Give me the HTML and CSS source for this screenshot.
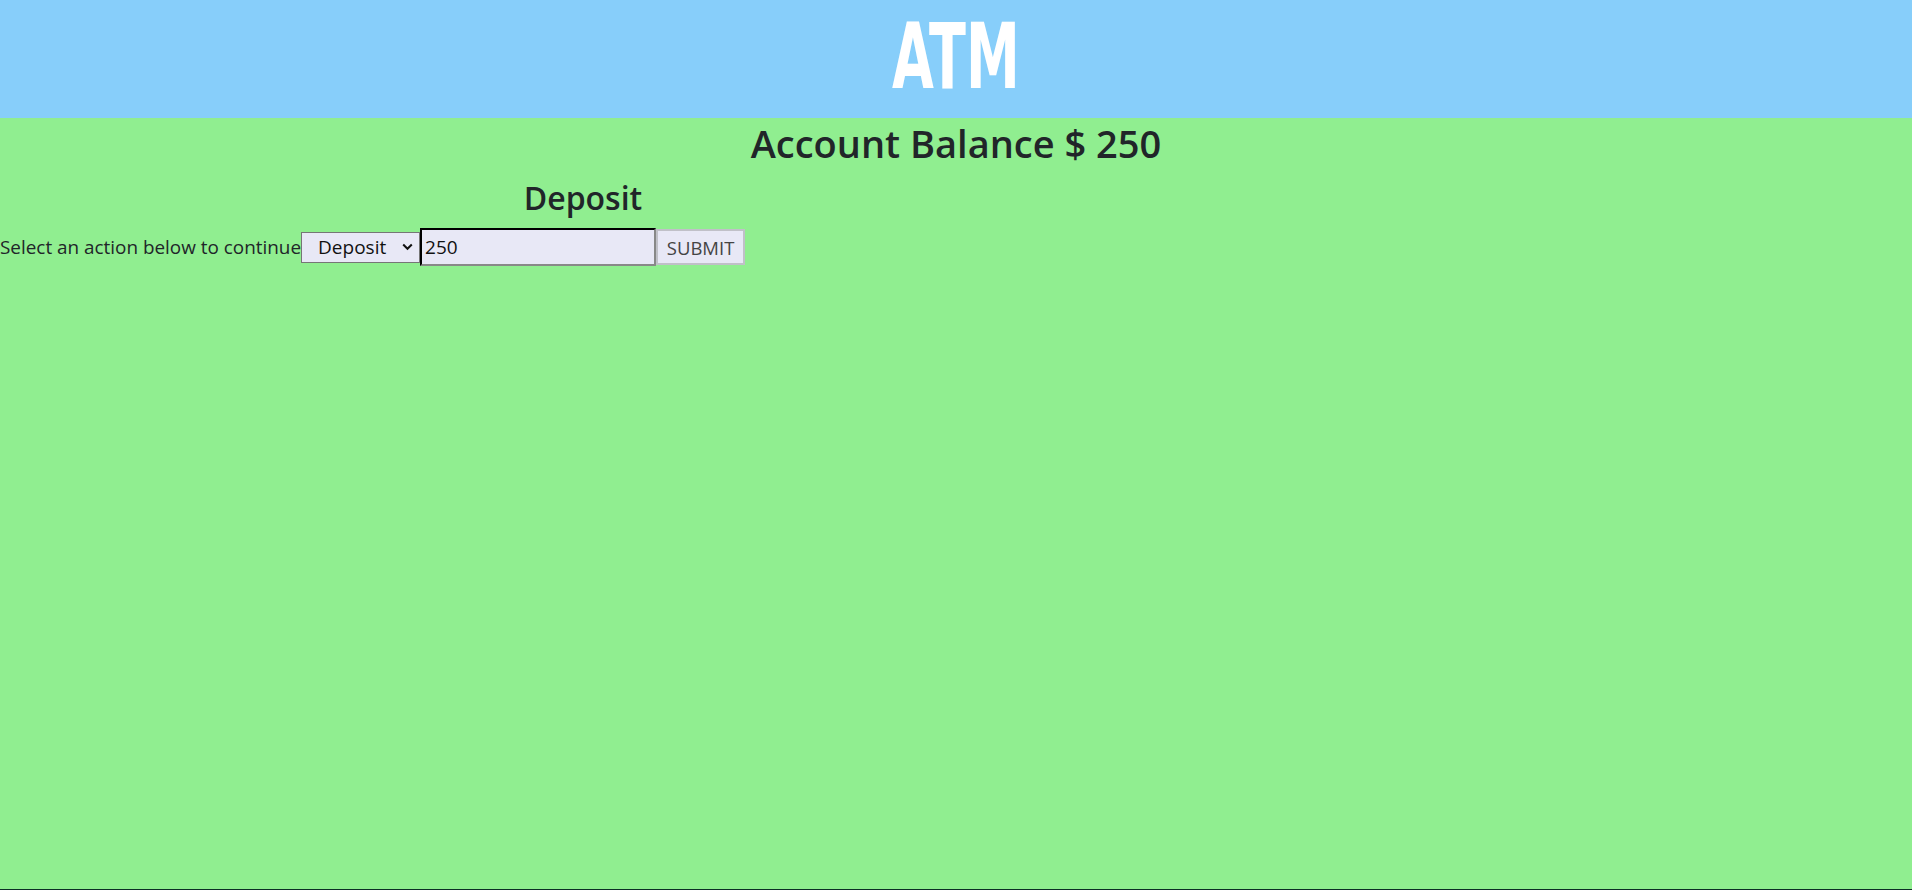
FILE: index.html
```html
<!DOCTYPE html>
<html lang="en">
<head>
<meta charset="utf-8">
<title>ATM</title>
<link rel="stylesheet" href="styles.css">
</head>
<body>
<div class="page">
  <header class="topbar">
    <span class="logo">ATM</span>
  </header>
  <main class="main">
    <h1 class="balance">Account Balance $ 250</h1>
    <section class="panel">
      <h3 class="panel-title">Deposit</h3>
      <form class="action-row">
        <span class="label">Select an action below to continue</span>
        <span class="select-wrap">
          <select class="select">
            <option>Deposit</option>
            <option>Cash Back</option>
          </select>
          <svg class="chev" width="11" height="8" viewBox="0 0 11 8"><path d="M1.2 1.5 L5.5 5.8 L9.8 1.5" fill="none" stroke="#111" stroke-width="2"/></svg>
        </span>
        <input class="amount" type="text" value="250">
        <button class="submit" type="button">SUBMIT</button>
      </form>
    </section>
  </main>
</div>
</body>
</html>
```
FILE: styles.css
```css
html, body {
  margin: 0;
  padding: 0;
}
body {
  font-family: "Open Sans", "Noto Sans", sans-serif;
  color: #212529;
  background: #90ee90;
}
.page {
  height: 890px;
  display: flex;
  flex-direction: column;
}
.topbar {
  height: 118px;
  flex: 0 0 118px;
  background: #87cefa;
  display: flex;
  justify-content: center;
  align-items: center;
  overflow: hidden;
}
.logo {
  display: inline-block;
  font-family: "Liberation Sans Narrow", "DejaVu Sans Condensed", "Liberation Sans", sans-serif;
  font-weight: 700;
  font-size: 91px;
  line-height: 1;
  color: #fff;
  transform: scaleX(0.66);
  margin-top: -6px;
}
.main {
  flex: 1;
  border-bottom: 1px solid #0d2e26;
}
.balance {
  margin: 0;
  text-align: center;
  font-size: 38px;
  font-weight: 600;
  line-height: 48px;
  padding-top: 1px;
}
.panel {
  width: 1166px;
}
.panel-title {
  margin: 0;
  text-align: center;
  font-size: 32px;
  font-weight: 600;
  line-height: 40px;
  padding-top: 11px;
}
.action-row {
  display: flex;
  align-items: center;
  margin-top: 10px;
}
.label {
  font-size: 18.9px;
  white-space: nowrap;
}
.select-wrap {
  position: relative;
  display: inline-block;
}
.select {
  appearance: none;
  -webkit-appearance: none;
  width: 119px;
  height: 31px;
  box-sizing: border-box;
  border: 1px solid #767676;
  border-radius: 0;
  background: #e8e8f6;
  font-family: inherit;
  font-size: 19px;
  color: #111;
  padding: 0 0 0 16px;
  margin: 0;
  display: block;
}
.chev {
  position: absolute;
  right: 7px;
  top: 11px;
  pointer-events: none;
}
.amount {
  width: 236px;
  height: 38px;
  box-sizing: border-box;
  border: 2px inset #767676;
  border-top-color: #222;
  border-left-color: #222;
  border-right-color: #888;
  border-bottom-color: #888;
  background: #e8e8f6;
  font-family: inherit;
  font-size: 19px;
  color: #111;
  padding: 0 3px;
  margin: 0;
}
.submit {
  width: 89px;
  height: 36px;
  box-sizing: border-box;
  border: 2px solid #c0c0c8;
  background: #e8e8f6;
  font-family: inherit;
  font-size: 18.5px;
  color: #444;
  padding: 0;
  margin: 0;
}
```
